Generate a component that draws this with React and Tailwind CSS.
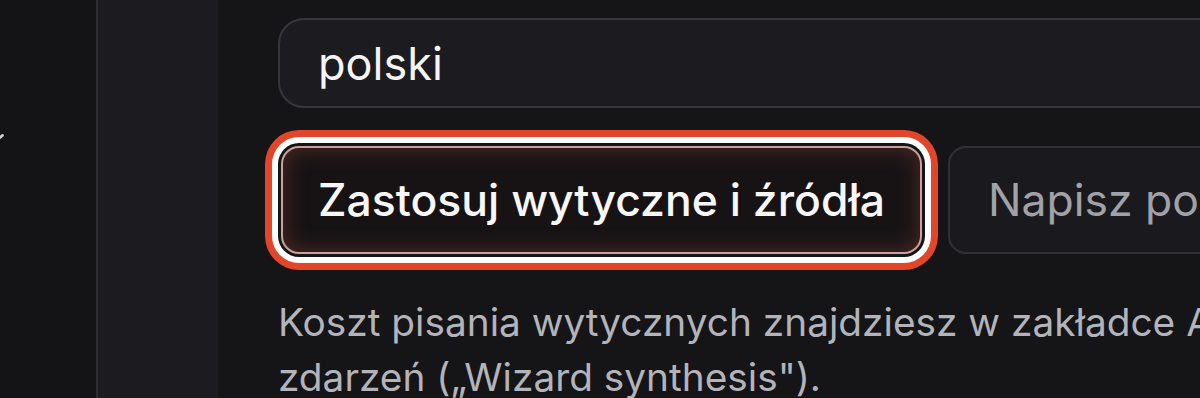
export default function App() {
  return (
    <div
      className="flex h-[398px] w-[1200px] overflow-hidden bg-[#151417]"
      style={{ fontFamily: 'Inter, "Noto Sans", sans-serif' }}
    >
      {/* Left rail */}
      <div className="relative w-[96px] shrink-0 bg-[#141416]">
        <svg
          className="absolute left-[-14px] top-[128px]"
          width="22"
          height="22"
          viewBox="0 0 24 24"
          fill="none"
          stroke="#cfcfd4"
          strokeWidth="3"
          strokeLinecap="round"
        >
          <path d="M4 20 L18 8" />
        </svg>
      </div>
      <div className="w-[2px] shrink-0 bg-[#2c2c31]" />

      {/* Secondary column */}
      <div className="w-[120px] shrink-0 bg-[#1c1c20]" />

      {/* Main */}
      <div className="flex-1 pl-[60px] pt-[18px]">
        <div className="flex h-[90px] w-[1100px] items-center rounded-[26px] border-2 border-[#36363c] bg-[#1c1b20] pl-[38px]">
          <span className="text-[45px] leading-none text-[#f4f4f5]">polski</span>
        </div>

        <div className="mt-[38px] flex gap-[26px] pl-[3px]">
          <button
            className="flex h-[108px] shrink-0 items-center rounded-[18px] border-2 border-[#c9a29d] bg-[#171315] px-[35px] text-[44.5px] font-medium text-[#f7f7f8] shadow-[inset_0_0_22px_rgba(150,70,60,0.45),0_0_0_3px_#151417,0_0_0_9px_#ffffff,0_0_0_16px_#e1452a]"
          >
            Zastosuj wytyczne i źródła
          </button>
          <button className="flex h-[108px] w-[600px] shrink-0 items-center whitespace-nowrap rounded-[18px] border-2 border-[#303035] bg-[#1a1a1e] px-[38px] text-[44.5px] text-[#a1a1a8]">
            Napisz poradnik
          </button>
        </div>

        <p className="mt-[40px] w-[1200px] whitespace-nowrap text-[38.8px] leading-[55px] text-[#b3b3ba]">
          Koszt pisania wytycznych znajdziesz w zakładce Analityka → Dziennik
          <br />
          zdarzeń („Wizard synthesis").
        </p>
      </div>
    </div>
  )
}
